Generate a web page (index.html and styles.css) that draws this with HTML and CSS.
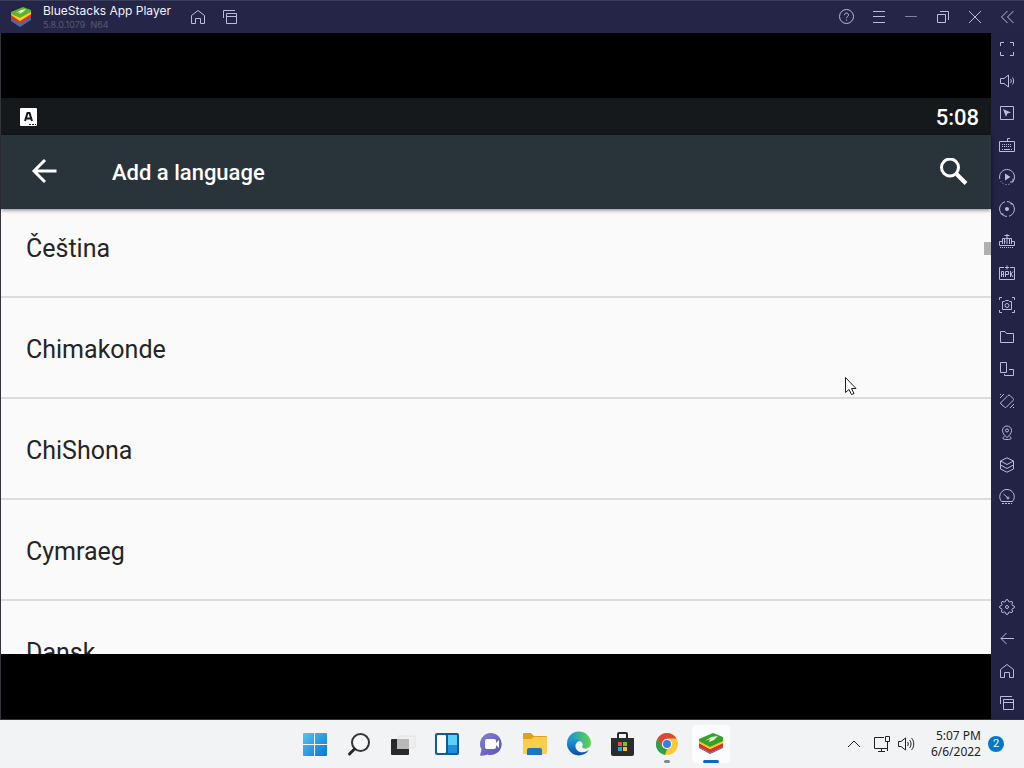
FILE: index.html
```
<!DOCTYPE html>
<html lang="en">
<head>
    <meta charset="UTF-8">
    <meta name="viewport" content="width=device-width, initial-scale=1.0">
    <title>BlueStacks App Player</title>
    <link rel="stylesheet" href="styles.css">
</head>
<body>
    <div class="window">
        <header class="titlebar">
            <svg class="logo" viewBox="0 0 24 24">
                <path d="M2 16l9 6 11-7v-3L11 18 2 13z" fill="#3f6fa8"/>
                <path d="M2 13l9 6 11-7V8L11 15 2 10z" fill="#e0352b"/>
                <path d="M2 10l9 6 11-7V6L11 12 2 8z" fill="#ffd21f"/>
                <path d="M2 7l12-5 8 3v2l-11 6L2 9z" fill="#5db52f"/>
                <path d="M7 8l5-3 5-1-3 3-4 2 1-2z" fill="#e4f6c8"/>
            </svg>
            <div class="app-name">
                <h1>BlueStacks App Player</h1>
                <p>5.8.0.1079&nbsp; N64</p>
            </div>
            <nav class="title-nav">
                <button class="tool" aria-label="Home"><svg viewBox="0 0 16 16"><path d="M1.500 6.500L8 1.500l6.500 5v8h-4V9.500h-5v5h-4z"/></svg></button>
                <button class="tool" aria-label="Recent apps"><svg viewBox="0 0 16 16"><path d="M1.500 9V1.500H13M4.500 4.500h10v10h-10zM4.500 7.500h10"/></svg></button>
            </nav>
            <div class="window-controls">
                <button class="tool" aria-label="Help"><svg viewBox="0 0 16 16"><circle cx="7.500" cy="7.500" r="7"/><path d="M5.500 6.200c0-3 4-2.700 4-.3 0 1.600-2 1.600-2 3.300M7.500 10.500v1.200"/></svg></button>
                <button class="tool" aria-label="Menu"><svg viewBox="0 0 16 16"><path d="M2 2.500h12M2 7.500h12M2 13.500h12"/></svg></button>
                <button class="tool dim" aria-label="Minimize"><svg viewBox="0 0 16 16"><path d="M2 7.500h12"/></svg></button>
                <button class="tool" aria-label="Restore"><svg viewBox="0 0 16 16"><path d="M2.500 5.500h8v8h-8zM5 2.500h8.500V11"/></svg></button>
                <button class="tool" aria-label="Close"><svg viewBox="0 0 16 16"><path d="M2 2l12 12M14 2L2 14"/></svg></button>
                <button class="tool" aria-label="Collapse sidebar"><svg viewBox="0 0 16 16"><path d="M8.500 2l-6 6 6 6M14.500 2l-6 6 6 6"/></svg></button>
            </div>
        </header>

        <div class="workspace">
            <main class="emulator">
                <section class="screen">
                    <div class="status-bar">
                        <svg class="keyboard-badge" viewBox="0 0 18 20">
                            <rect x="1" y="1" width="17" height="18" rx="1" fill="#fff"/>
                            <path d="M6 14l2.500-8h2l2.500 8M7 11.500h5" fill="none" stroke="#15191c" stroke-width="2"/>
                            <path d="M10 17.500h7" stroke="#15191c" stroke-dasharray="2 1"/>
                        </svg>
                        <time>5:08</time>
                    </div>
                    <div class="toolbar">
                        <button class="icon-button" aria-label="Back"><svg viewBox="0 0 28 28"><path d="M26.500 13H4M15 2L4 13l11 11"/></svg></button>
                        <h2>Add a language</h2>
                        <button class="icon-button" aria-label="Search"><svg viewBox="0 0 28 28"><circle cx="10" cy="9.500" r="8.500"/><path d="M16.500 16l9.500 9.500" stroke-width="4"/></svg></button>
                    </div>
                    <div class="list-wrap">
                        <ul class="languages">
                            <li><button>Čeština</button></li>
                            <li><button>Chimakonde</button></li>
                            <li><button>ChiShona</button></li>
                            <li><button>Cymraeg</button></li>
                            <li><button>Dansk</button></li>
                        </ul>
                        <span class="scroll-thumb"></span>
                    </div>
                </section>
            </main>

            <aside class="sidebar">
                <button class="tool" aria-label="Full screen"><svg viewBox="0 0 16 16"><path d="M1.500 5V1.500H5M11 1.500h3.500V5M14.500 11v3.500H11M5 14.500H1.500V11"/></svg></button>
                <button class="tool" aria-label="Volume"><svg viewBox="0 0 16 16"><path d="M1.500 5.500H5L9.500 2v12L5 10.500H1.500zM11.500 6c1 1 1 3 0 4M13.500 4.500c1.500 2 1.500 5 0 7"/></svg></button>
                <button class="tool" aria-label="Lock cursor"><svg viewBox="0 0 16 16"><path d="M1.500 1.500h13v13h-13z"/><path class="solid" d="M4 4l8 3.500-3.500 1L7 12z"/></svg></button>
                <button class="tool" aria-label="Game controls"><svg viewBox="0 0 16 16"><path d="M.5 4.500h15v10H.5zM8.500 4V1.500H11"/><path d="M3 7.500h10M3 9.500h10" stroke-dasharray="1 1"/><path d="M3 12.500h1M5 12.500h6M12 12.500h1"/></svg></button>
                <button class="tool" aria-label="Macro playback"><svg viewBox="0 0 16 16"><path d="M.8 10A7.500 7.500 0 1 1 14 12.500M14 9.500v3.500h-3"/><path d="M1.500 12a7.500 7.500 0 0 0 11 2" stroke-dasharray="1 2"/><path class="solid" d="M6 4.500l5.500 3.500L6 11.500z"/></svg></button>
                <button class="tool" aria-label="Sync operations"><svg viewBox="0 0 16 16"><path d="M6 .8A7.400 7.400 0 0 0 2.800 13.200M10 15.200A7.400 7.400 0 0 0 13.200 2.800M8 .6q2 0 3.500 1M8 15.400q-2 0-3.500-1"/><path class="solid" d="M1 12.500h3.500V15zM15 3.500h-3.500V1z"/><circle class="solid" cx="8" cy="8" r="2"/></svg></button>
                <button class="tool" aria-label="Real-time translation"><svg viewBox="0 0 16 16"><path d="M3 8.500H.5v4h15v-4H13M8 1v4M5.500 2.500h5M3.500 11V5.500h3M5 8.500h1.500M5.500 6v5M8 5v6M10.500 11V5.500h2V11M6.500 5.500h4"/><path d="M1 14.500h14" stroke-dasharray="1 1"/></svg></button>
                <button class="tool" aria-label="Install APK"><svg viewBox="0 0 16 16"><path d="M5 2.500H.5v12h15v-12H11M8 .5v4M6 2.500h4M2.500 12V6.500h2V12M2.500 9.500h2M6.500 12V6.500h3v3h-3M11.500 6v6M14 6.500l-2 2.500 2 3"/></svg></button>
                <button class="tool" aria-label="Screenshot"><svg viewBox="0 0 16 16"><path d="M.5 3V.5H3M13 .5h2.500V3M15.500 13v2.500H13M3 15.500H.5V13M3.500 4.500h2l1-1h3l1 1h2v8h-9z"/><circle cx="8" cy="8.500" r="2"/></svg></button>
                <button class="tool" aria-label="Media folder"><svg viewBox="0 0 16 16"><path d="M1.500 13.500v-11H6L7.500 4.500h7v9z"/></svg></button>
                <button class="tool" aria-label="Multi instance"><svg viewBox="0 0 16 16"><path d="M1.500 1.500h6v10h-6zM10 8.500h4.500v6h-9V13"/></svg></button>
                <button class="tool" aria-label="Shake"><svg viewBox="0 0 16 16"><path d="M1.500 10L9 2.500q1-1 2 0L14 5.500q1 1 0 2L7.500 14q-1 1-2 0L2 11zM1 5l4-4M1 2l1-1M11 15l4-4M14 15l1-1"/></svg></button>
                <button class="tool" aria-label="Location"><svg viewBox="0 0 16 16"><path d="M8 12.500C5 10 3.500 8 3.500 5.500a4.500 4.500 0 0 1 9 0C12.500 8 11 10 8 12.500zM5.500 11.500c-3 1.500-2 3 2.500 3s5.500-1.500 2.500-3"/><circle cx="8" cy="5.500" r="1.500"/></svg></button>
                <button class="tool" aria-label="Instance manager"><svg viewBox="0 0 16 16"><path d="M1.500 4L8 .8 14.500 4v8L8 15.200 1.500 12zM1.500 4L8 7.500 14.500 4M1.500 8L8 11.500 14.500 8"/></svg></button>
                <button class="tool" aria-label="Performance"><svg viewBox="0 0 16 16"><path d="M2.500 12.500a7.300 7.300 0 1 1 11 0zM4.500 5l4.500 4"/><circle cx="9" cy="9" r="1"/><path d="M3 14.500h10" stroke-dasharray="2 1"/></svg></button>

                <div class="sidebar-bottom">
                    <button class="tool" aria-label="Settings"><svg viewBox="0 0 16 16"><path d="M6.500 2.500q0-2 1.500-2t1.500 2l1.300.6q1.400-1.500 2.400-.3t-.3 2.400l.6 1.300q2 0 2 1.500t-2 1.500l-.6 1.300q1.400 1.400.3 2.400t-2.400-.3l-1.300.6q0 2-1.500 2t-1.500-2l-1.300-.6q-1.400 1.400-2.400.3t.3-2.400l-.6-1.300q-2 0-2-1.500t2-1.500l.6-1.300q-1.400-1.400-.3-2.400t2.400.3z"/><circle cx="8" cy="8" r="1.500"/></svg></button>
                    <button class="tool" aria-label="Back"><svg viewBox="0 0 16 16"><path d="M15 7.500H2M7.500 2L2 7.500 7.500 13"/></svg></button>
                    <button class="tool" aria-label="Home"><svg viewBox="0 0 16 16"><path d="M1.500 6.500L8 1.500l6.500 5v8h-4V9.500h-5v5h-4z"/></svg></button>
                    <button class="tool" aria-label="Recent apps"><svg viewBox="0 0 16 16"><path d="M1.500 9V1.500H13M4.500 4.500h10v10h-10zM4.500 7.500h10"/></svg></button>
                </div>
            </aside>
        </div>
    </div>

    <footer class="taskbar">
        <nav class="apps">
            <button class="app" aria-label="Start"><svg viewBox="0 0 26 26">
                <defs><linearGradient id="win" x1="0" y1="0" x2="26" y2="26" gradientUnits="userSpaceOnUse"><stop offset="0" stop-color="#58c9f5"/><stop offset="1" stop-color="#0574d1"/></linearGradient></defs>
                <path fill="url(#win)" d="M1 3q0-1 1-1h10v11H1zM13 2h11q1 0 1 1v10H13zM1 14h11v11H2q-1 0-1-1zM13 14h12v10q0 1-1 1H13z"/>
            </svg></button>
            <button class="app" aria-label="Search"><svg viewBox="0 0 26 26">
                <circle cx="14.500" cy="11.500" r="8.500" fill="#f8f8f8" stroke="#33363a" stroke-width="2"/>
                <path d="M8.500 18L3.500 23" stroke="#26282b" stroke-width="3" stroke-linecap="round"/>
            </svg></button>
            <button class="app" aria-label="Task view"><svg viewBox="0 0 26 26">
                <rect x="8" y="5" width="17" height="12" rx="1" fill="#efefef" stroke="#e2e2e2"/>
                <rect x="1" y="8" width="18" height="16" rx="1" fill="#292929"/>
                <path d="M7 8h12v10H7z" fill="#b9b9b9"/>
            </svg></button>
            <button class="app" aria-label="Widgets"><svg viewBox="0 0 26 26">
                <rect x="1" y="2" width="24" height="22" rx="2" fill="#145a99"/>
                <rect x="3" y="4" width="9" height="18" rx="1" fill="#fafcff"/>
                <path d="M14 4h9v10h-9z" fill="#5bd0fa"/>
                <path d="M14 14h9v8h-9z" fill="#1f91dc"/>
            </svg></button>
            <button class="app" aria-label="Chat"><svg viewBox="0 0 26 26">
                <defs><linearGradient id="chat" x2="1" y2="1"><stop stop-color="#8583ca"/><stop offset="1" stop-color="#5b4fbe"/></linearGradient></defs>
                <path d="M13.500 2a11 11 0 1 1-4 21.500Q6 25 2 24.500l1.500-6A11 11 0 0 1 13.500 2z" fill="url(#chat)"/>
                <rect x="7" y="8" width="11" height="10" rx="2" fill="#fff"/>
                <path d="M18 12l3-3v8l-3-3z" fill="#fff"/>
            </svg></button>
            <button class="app" aria-label="File Explorer"><svg viewBox="0 0 26 26">
                <path d="M1 3q0-1 1-1h7l3 3h12q1 0 1 1v6H1z" fill="#dfa11d"/>
                <path d="M1 8h8l3-2h12q1 0 1 1v15q0 1-1 1H2q-1 0-1-1z" fill="#fccc4b"/>
                <path d="M5 24v-5q0-2 2-2h11q2 0 2 2v5z" fill="#1c75bd"/>
            </svg></button>
            <button class="app" aria-label="Microsoft Edge"><svg viewBox="0 0 26 26">
                <defs>
                    <linearGradient id="edge" x2="1"><stop stop-color="#168edb"/><stop offset="1" stop-color="#62d64f"/></linearGradient>
                    <linearGradient id="wave" x2="0" y2="1"><stop stop-color="#1b9de1"/><stop offset="1" stop-color="#0d4e9c"/></linearGradient>
                </defs>
                <path d="M1 13a12 12 0 0 1 24-1c0 6-7 7-9 4 2-3 0-6-4-6-5 0-9 2-10 7z" fill="url(#edge)"/>
                <path d="M1 13c2-6 10-7 13-3-5 0-7 9 0 11 4 1 7-1 9-2A12 12 0 0 1 1 13z" fill="url(#wave)"/>
            </svg></button>
            <button class="app" aria-label="Microsoft Store"><svg viewBox="0 0 26 26">
                <path d="M8 7V3q0-1 1-1h7q1 0 1 1v4" fill="none" stroke="#292929" stroke-width="2"/>
                <path d="M1 7h23v16q0 2-2 2H3q-2 0-2-2z" fill="#2b2c2e"/>
                <path d="M8 11h4v4H8z" fill="#e85234"/><path d="M13 11h4v4h-4z" fill="#80bc24"/>
                <path d="M8 16h4v4H8z" fill="#20a5e9"/><path d="M13 16h4v4h-4z" fill="#fabd1a"/>
            </svg></button>
            <button class="app running" aria-label="Google Chrome"><svg viewBox="0 0 26 26">
                <circle cx="13" cy="13" r="11" fill="#fbc934"/>
                <path d="M3.500 7.500A11 11 0 0 1 22.500 7.500H13L8 16z" fill="#df4637"/>
                <path d="M3.500 7.500L8.500 16 13 18.500l-2 5.500A11 11 0 0 1 3.500 7.500z" fill="#2b9e50"/>
                <circle cx="13" cy="13" r="5" fill="#fff"/><circle cx="13" cy="13" r="4" fill="#397de8"/>
            </svg></button>
            <button class="app active" aria-label="BlueStacks"><svg viewBox="0 0 26 26">
                <path d="M1 16l11 6 13-6v1l-13 6-11-6z" fill="#2c67ab"/>
                <path d="M1 12l11 6 13-6v4l-13 6-11-6z" fill="#da332a"/>
                <path d="M1 9l11 6 13-6v3l-13 6-11-6z" fill="#ffc914"/>
                <path d="M1 8l14-6 10 4v4l-13 6-11-6z" fill="#35a02d"/>
                <path d="M7 10l6-4 7-1-4 4-5 2 1-3z" fill="#e1f8bf"/>
            </svg></button>
        </nav>
        <div class="tray">
            <button class="tray-icon" aria-label="Show hidden icons"><svg viewBox="0 0 18 18"><path d="M3 12l6-6 6 6"/></svg></button>
            <button class="tray-icon" aria-label="Network"><svg viewBox="0 0 18 18"><path d="M11 2.500H1.500v11h13V9M5 16.500h7M8.500 14v2M12.500 1.500h4v5h-4zM14.500 7v9"/></svg></button>
            <button class="tray-icon" aria-label="Sound"><svg viewBox="0 0 18 18"><path d="M1.500 6.500H4L8.500 3v12L4 11.500H1.500zM10.500 7c1 1 1 3 0 4M12.500 5c2 2 2 6 0 8M14.500 3c3 3 3 9 0 12"/></svg></button>
            <div class="clock"><time>5:07 PM</time><time>6/6/2022</time></div>
            <span class="badge">2</span>
        </div>
    </footer>

    <svg class="cursor" viewBox="0 0 14 20"><path d="M1.500 1.500v15l3.500-3 2.500 5 2.500-1-2.500-5H12z" fill="#fff" stroke="#222"/></svg>
</body>
</html>
```
FILE: styles.css
```
* {
    box-sizing: border-box;
}
body {
    margin: 0;
    height: 100vh;
    display: flex;
    flex-direction: column;
    overflow: hidden;
    position: relative;
    font-family: Roboto, sans-serif;
}
h1, h2, p, ul {
    margin: 0;
    padding: 0;
    font-weight: 400;
}
button {
    border: 0;
    padding: 0;
    background: none;
    font: inherit;
    color: inherit;
}
svg {
    display: block;
    flex: none;
}

/* BlueStacks window */
.window {
    flex: 1;
    min-height: 0;
    display: flex;
    flex-direction: column;
    background: #222345;
    border-bottom: 1px solid #34353f;
}
.titlebar {
    height: 33px;
    flex: none;
    display: flex;
    align-items: center;
    padding: 0 1px 0 9px;
    background: #252647;
    border-top: 1px solid #3c3d5c;
}
.logo {
    width: 24px;
    height: 24px;
}
.app-name {
    margin-left: 10px;
    padding-top: 2px;
    font-family: Inter, sans-serif;
    white-space: nowrap;
}
.app-name h1 {
    font-size: 12px;
    line-height: 14px;
    color: #f2f2fa;
}
.app-name p {
    font-size: 9px;
    line-height: 14px;
    color: #575878;
}
.title-nav {
    display: flex;
    margin-left: 11px;
}
.window-controls {
    display: flex;
    margin-left: auto;
}
.tool {
    width: 32px;
    height: 32px;
    display: flex;
    align-items: center;
    justify-content: center;
}
.tool svg {
    width: 16px;
    height: 16px;
    fill: none;
    stroke: #b9bbdf;
}
.tool.dim svg {
    stroke: #7f81a4;
}
.tool .solid {
    fill: #b9bbdf;
    stroke: none;
}

.workspace {
    flex: 1;
    min-height: 0;
    display: flex;
}
.sidebar {
    width: 33px;
    display: flex;
    flex-direction: column;
}
.sidebar-bottom {
    margin-top: auto;
}

/* Android screen */
.emulator {
    flex: 1;
    display: flex;
    padding: 65px 0;
    background: #000;
    border-left: 1px solid #33343c;
}
.screen {
    flex: 1;
    min-height: 0;
    display: flex;
    flex-direction: column;
    background: #fafafa;
}
.status-bar {
    height: 37px;
    flex: none;
    display: flex;
    align-items: center;
    justify-content: space-between;
    padding: 2px 12px 0 18px;
    background: #15191c;
    color: #fff;
    font-size: 22px;
    font-weight: 500;
}
.keyboard-badge {
    width: 18px;
    height: 20px;
    margin-bottom: 2px;
}
.toolbar {
    height: 74px;
    flex: none;
    display: flex;
    align-items: center;
    padding: 0 23px 0 29px;
    background: #29333a;
    color: #fff;
    box-shadow: 0 1px 4px rgba(0, 0, 0, 0.5);
    z-index: 1;
}
.toolbar h2 {
    flex: 1;
    margin-left: 54px;
    font-size: 22px;
    font-weight: 500;
}
.icon-button svg {
    width: 28px;
    height: 28px;
    fill: none;
    stroke: #fff;
    stroke-width: 3;
}
.list-wrap {
    flex: 1;
    min-height: 0;
    position: relative;
    overflow: hidden;
}
.languages {
    list-style: none;
    margin-top: -12px;
}
.languages li {
    height: 101px;
    border-bottom: 2px solid #dcdcdc;
}
.languages button {
    width: 100%;
    height: 100%;
    padding: 4px 25px 0;
    text-align: left;
    font-size: 25px;
    color: #252525;
}
.scroll-thumb {
    position: absolute;
    top: 33px;
    right: 0;
    width: 7px;
    height: 13px;
    background: #b0b0b0;
}

/* Windows taskbar */
.taskbar {
    height: 48px;
    flex: none;
    display: grid;
    grid-template-columns: 1fr auto 1fr;
    align-items: center;
    padding-left: 2px;
    background: #f2f3f5;
}
.apps {
    grid-column: 2;
    display: flex;
}
.app {
    position: relative;
    width: 44px;
    height: 38px;
    display: flex;
    align-items: center;
    justify-content: center;
}
.app svg {
    width: 26px;
    height: 26px;
}
.app.active {
    width: 38px;
    margin: 0 3px;
    border-radius: 4px;
    background: #fcfcfd;
}
.app.running::after,
.app.active::after {
    content: "";
    position: absolute;
    bottom: 0;
    width: 6px;
    height: 3px;
    border-radius: 2px;
    background: #84868a;
}
.app.active::after {
    width: 16px;
    background: #0b69c0;
}
.tray {
    display: flex;
    align-items: center;
    justify-content: flex-end;
    padding-right: 20px;
}
.tray-icon {
    width: 18px;
    margin-right: 6px;
}
.tray-icon:first-child {
    margin-right: 10px;
}
.tray-icon svg {
    width: 18px;
    height: 18px;
    fill: none;
    stroke: #222;
}
.clock {
    display: flex;
    flex-direction: column;
    align-items: flex-end;
    margin-left: 10px;
    font-family: "Noto Sans", sans-serif;
    font-size: 12px;
    line-height: 16px;
    color: #222;
}
.badge {
    width: 16px;
    height: 16px;
    margin-left: 7px;
    border-radius: 50%;
    background: #0078c8;
    color: #fff;
    font-size: 11px;
    line-height: 16px;
    text-align: center;
}

/* pointer over the screen */
.cursor {
    position: absolute;
    left: 844px;
    top: 376px;
    width: 14px;
    height: 20px;
    z-index: 2;
}
```
